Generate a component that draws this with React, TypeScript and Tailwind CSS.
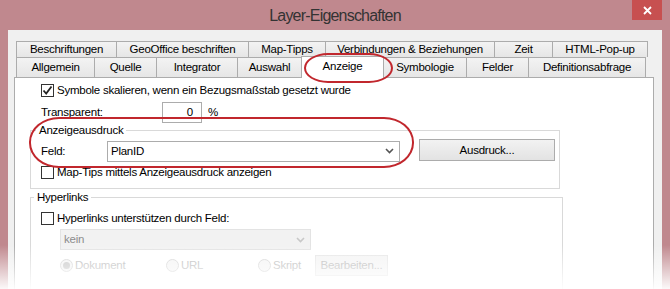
import React from "react";

const row1 = [
  { label: "Beschriftungen", w: "w-[101px]" },
  { label: "GeoOffice beschriften", w: "w-[133px]" },
  { label: "Map-Tipps", w: "w-[78px]" },
  { label: "Verbindungen & Beziehungen", w: "w-[170px]" },
  { label: "Zeit", w: "w-[59px]" },
  { label: "HTML-Pop-up", w: "w-[96px]" },
];

const row2 = [
  { label: "Allgemein", w: "w-[79px]" },
  { label: "Quelle", w: "w-[63px]" },
  { label: "Integrator", w: "w-[82px]" },
  { label: "Auswahl", w: "w-[65px]" },
  { label: "Anzeige", w: "w-[83px]", active: true },
  { label: "Symbologie", w: "w-[84px]" },
  { label: "Felder", w: "w-[63px]" },
  { label: "Definitionsabfrage", w: "w-[118px]" },
];

function CheckBox({ checked = false }: { checked?: boolean }) {
  return (
    <span className="w-[13px] h-[13px] border border-[#333] bg-white flex items-center justify-center shrink-0">
      {checked && (
        <svg width="11" height="11" viewBox="0 0 11 11">
          <path d="M1.5 5.5 L4.2 8.5 L9.5 1.5" fill="none" stroke="#222" strokeWidth="1.8" />
        </svg>
      )}
    </span>
  );
}

function Chevron({ color = "#555" }: { color?: string }) {
  return (
    <svg width="9" height="6" viewBox="0 0 9 6">
      <path d="M1 1 L4.5 4.5 L8 1" fill="none" stroke={color} strokeWidth="1.6" />
    </svg>
  );
}

function Radio({ selected = false }: { selected?: boolean }) {
  return (
    <span className="w-[13px] h-[13px] rounded-full border border-[#d4d4d4] bg-[#f4f4f4] flex items-center justify-center shrink-0">
      {selected && <span className="w-[7px] h-[7px] rounded-full bg-[#c4c4c4]" />}
    </span>
  );
}

export default function App() {
  return (
    <div className="relative w-[670px] h-[289px] overflow-hidden bg-[#c0888e] font-['Liberation_Sans',Arial,sans-serif] text-[11.5px] tracking-[-0.25px] text-black">
      {/* Title bar */}
      <div className="relative h-[30px] flex items-center justify-center pt-[2px]">
        <span className="text-[16px] tracking-[-0.8px] text-[#333]">Layer-Eigenschaften</span>
        <div className="absolute right-[8px] top-0 w-[30px] h-[20px] bg-[#c75050] flex items-center justify-center">
          <svg width="9" height="9" viewBox="0 0 9 9">
            <path d="M1 1 L8 8 M8 1 L1 8" stroke="white" strokeWidth="1.8" />
          </svg>
        </div>
      </div>

      {/* Client area */}
      <div className="mx-[8px] h-[259px] bg-[#f0f0f0] pl-[6px] pr-[8px] pt-[11px]">
        {/* Tab row 1 */}
        <div className="flex pl-[2px] h-[16px]">
          {row1.map((t, i) => (
            <div
              key={t.label}
              className={`${t.w} ${i === 0 ? "" : "-ml-px"} border border-b-0 border-[#acacac] bg-gradient-to-b from-[#f3f3f3] to-[#e6e6e6] flex items-center justify-center leading-none`}
            >
              {t.label}
            </div>
          ))}
        </div>
        {/* Tab row 2 */}
        <div className="relative z-10 flex items-end pl-[2px] h-[20px]">
          {row2.map((t, i) =>
            t.active ? (
              <div
                key={t.label}
                className={`${t.w} -ml-px h-[22px] -mb-px border border-b-0 border-[#acacac] bg-white flex items-center justify-center leading-none pb-[2px]`}
              >
                {t.label}
              </div>
            ) : (
              <div
                key={t.label}
                className={`${t.w} ${i === 0 ? "" : "-ml-px"} h-[20px] border border-b-0 border-[#acacac] bg-gradient-to-b from-[#f3f3f3] to-[#e6e6e6] flex items-center justify-center leading-none`}
              >
                {t.label}
              </div>
            )
          )}
        </div>

        {/* Panel */}
        <div className="border border-[#acacac] bg-white h-[220px] flex flex-col">
          <div className="mt-[3px] h-[20px] ml-[26px] flex items-center gap-[3px]">
            <CheckBox checked />
            <span>Symbole skalieren, wenn ein Bezugsmaßstab gesetzt wurde</span>
          </div>
          <div className="mt-[1px] h-[21px] ml-[26px] flex items-center">
            <span className="w-[121px]">Transparent:</span>
            <div className="w-[40px] h-[21px] border border-[#acacac] flex items-center justify-end pr-[8px]">0</div>
            <span className="ml-[6px]">%</span>
          </div>

          {/* Anzeigeausdruck group */}
          <div className="relative mt-[7px] ml-[15px] w-[530px] h-[60px] border border-[#d9d9d9] pl-[10px] pt-[10px]">
            <span className="absolute left-[5px] top-[-8px] bg-white px-[3px] leading-[15px]">Anzeigeausdruck</span>
            <div className="flex items-center h-[21px]">
              <span className="w-[66px]">Feld:</span>
              <div className="w-[293px] h-[21px] border border-[#acacac] flex items-center justify-between pl-[3px] pr-[5px]">
                <span>PlanID</span>
                <Chevron />
              </div>
              <div className="ml-[19px] -mt-[2px] w-[136px] h-[22px] border border-[#acacac] bg-gradient-to-b from-[#f2f2f2] to-[#e3e3e3] flex items-center justify-center">
                Ausdruck...
              </div>
            </div>
            <div className="mt-[1px] h-[20px] flex items-center gap-[3px]">
              <CheckBox />
              <span>Map-Tips mittels Anzeigeausdruck anzeigen</span>
            </div>
          </div>

          {/* Hyperlinks group */}
          <div className="relative mt-[8px] ml-[15px] w-[533px] h-[100px] border border-[#d9d9d9] pl-[10px] pt-[10px]">
            <span className="absolute left-[3px] top-[-8px] bg-white px-[3px] leading-[15px]">Hyperlinks</span>
            <div className="h-[20px] flex items-center gap-[3px]">
              <CheckBox />
              <span>Hyperlinks unterstützen durch Feld:</span>
            </div>
            <div className="mt-[1px] ml-[19px] w-[251px] h-[21px] border border-[#e3e3e3] bg-[#f2f2f2] flex items-center justify-between pl-[3px] pr-[5px] text-[#8d8d8d]">
              <span>kein</span>
              <Chevron color="#c8c8c8" />
            </div>
            <div className="mt-[5px] ml-[19px] h-[21px] flex items-center text-[#b5b5b5]">
              <div className="w-[106px] flex items-center gap-[2px]">
                <Radio selected />
                <span>Dokument</span>
              </div>
              <div className="w-[92px] flex items-center gap-[2px]">
                <Radio />
                <span>URL</span>
              </div>
              <div className="w-[57px] flex items-center gap-[2px]">
                <Radio />
                <span>Skript</span>
              </div>
              <div className="w-[73px] h-[21px] border border-[#e6e6e6] bg-[#f4f4f4] flex items-center justify-center">
                Bearbeiten...
              </div>
            </div>
          </div>
        </div>
      </div>

      {/* Annotation ellipses */}
      <div className="absolute z-20 left-[304px] top-[53px] w-[89px] h-[30px] border-2 border-[#c1272d] rounded-[24px/15px] pointer-events-none" />
      <div className="absolute z-20 left-[29px] top-[117px] w-[385px] h-[51px] border-2 border-[#c1272d] rounded-[30px/25px] pointer-events-none" />

      {/* Bottom fade */}
      <div className="absolute z-30 left-0 right-0 bottom-0 h-[44px] bg-gradient-to-b from-white/0 to-white/95 pointer-events-none" />
    </div>
  );
}
